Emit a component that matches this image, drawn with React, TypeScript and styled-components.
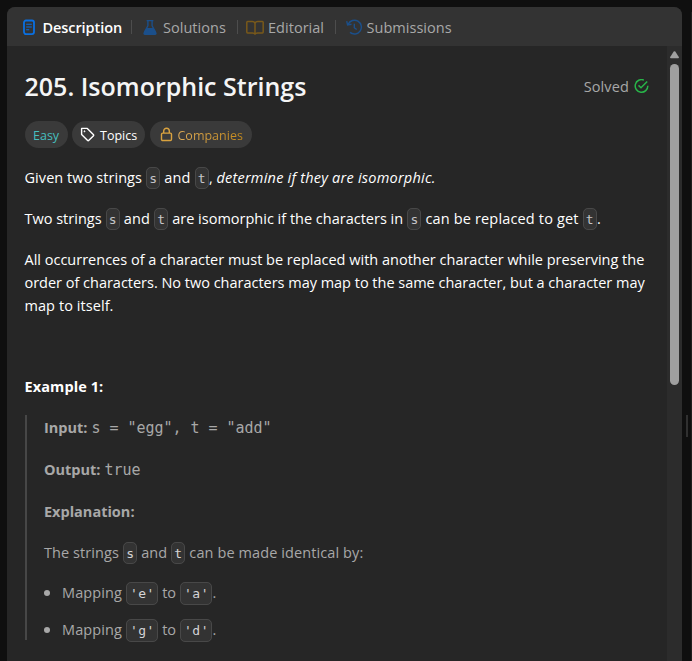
import React from "react";
import styled, { createGlobalStyle } from "styled-components";

const GlobalStyle = createGlobalStyle`
  * { box-sizing: border-box; }
  html, body { margin: 0; padding: 0; background: #0f0f0f; overflow: hidden; }
  body { font-family: "Open Sans", "Noto Sans", sans-serif; font-size: 14.5px; line-height: 23px; color: #fff; }
  p, h1, ul { margin: 0; padding: 0; font-weight: inherit; }
`;

const Page = styled.div`
  display: flex;
  width: 692px;
  height: 661px;
  padding: 7px 0 0 7px;
  overflow: hidden;
`;

const Panel = styled.section`
  display: flex;
  flex-direction: column;
  width: 675px;
  background: #262626;
  border-radius: 8px 8px 0 0;
  overflow: hidden;
`;

const TabBar = styled.nav`
  display: flex;
  align-items: center;
  flex: none;
  height: 39px;
  padding: 2px 0 0 15px;
  background: #333;
`;

const Tab = styled.div<{ $width: number; $active?: boolean }>`
  display: flex;
  align-items: center;
  flex: none;
  width: ${(p) => p.$width}px;
  color: ${(p) => (p.$active ? "#fff" : "#a8a8a8")};
  font-weight: ${(p) => (p.$active ? 600 : 400)};
  letter-spacing: ${(p) => (p.$active ? "-0.08px" : "0.03px")};
  white-space: nowrap;
`;

const TabIcon = styled.span<{ $width: number }>`
  display: flex;
  flex: none;
  width: ${(p) => p.$width}px;
`;

const Divider = styled.span<{ $after: number }>`
  flex: none;
  width: 1px;
  height: 14px;
  margin: 0 ${(p) => p.$after}px 1px 0;
  background: #4d4d4d;
`;

const Body = styled.div`
  display: flex;
  flex: 1;
  min-height: 0;
`;

const Content = styled.main`
  flex: 1;
  min-width: 0;
  padding: 23px 18px 0 17.5px;
`;

const TitleRow = styled.header`
  display: flex;
  justify-content: space-between;
  align-items: center;
  height: 34px;
`;

const Title = styled.h1`
  font-size: 25px;
  font-weight: 600;
  line-height: 34px;
  color: #f5f5f5;
`;

const Solved = styled.span`
  display: flex;
  align-items: center;
  gap: 5px;
  color: #a8a8a8;
  letter-spacing: 0.13px;
`;

const Tags = styled.div`
  display: flex;
  height: 27px;
  margin: 18px 0 18px 0.5px;
`;

const Tag = styled.span<{ $width: number; $color: string; $gap?: number; $after?: number; $inset?: number }>`
  display: flex;
  align-items: center;
  gap: ${(p) => p.$gap ?? 0}px;
  width: ${(p) => p.$width}px;
  margin-right: ${(p) => p.$after ?? 0}px;
  padding: 1px 0 0 ${(p) => p.$inset ?? 8}px;
  border-radius: 14px;
  background: #3a3a3a;
  color: ${(p) => p.$color};
  font-size: 12.5px;
  svg { margin-top: -2px; }
`;

const Companies = styled.span`
  background: linear-gradient(90deg, #dcaa57, #c58a1c);
  background-clip: text;
  color: transparent;
`;

const Paragraph = styled.p<{ $after?: number }>`
  margin-bottom: ${(p) => p.$after ?? 18}px;
  white-space: nowrap;
`;

const Run = styled.span<{ $track: number }>`
  letter-spacing: ${(p) => p.$track}px;
`;

const Emphasis = styled.em`
  letter-spacing: 0.22px;
`;

const Code = styled.code`
  margin: 0 0.35px;
  padding: 3px 2.1px 2px;
  border: 1px solid #484848;
  border-radius: 5px;
  background: #333;
  color: #c4c4c8;
  font-family: "DejaVu Sans Mono", monospace;
  font-size: 13px;
  line-height: 1;
`;

const CodeString = styled(Code)`
  padding: 3px 2.2px 3px 2.8px;
  letter-spacing: 0.5px;
`;

const Heading = styled.p`
  margin: 57.5px 0 17px;
  font-weight: 700;
  letter-spacing: 0.1px;
`;

const Example = styled.div`
  height: 225px;
  padding: 1.5px 0 0 17px;
  margin-left: 0.5px;
  border-left: 2px solid #474747;
  color: #a8a8a8;
  white-space: nowrap;
  ${Code} {
    color: #d4d4d6;
  }
`;

const Strong = styled.strong`
  font-weight: 700;
`;

const Sample = styled.span`
  margin-left: 4px;
  font-family: "DejaVu Sans Mono", monospace;
  font-size: 15px;
  letter-spacing: -0.03px;
  line-height: 1;
`;

const List = styled.ul`
  list-style: none;
`;

const Item = styled.li`
  display: flex;
  align-items: center;
  height: 23px;
  margin-bottom: 14px;
`;

const Bullet = styled.span`
  width: 6px;
  height: 6px;
  margin-right: 12px;
  border-radius: 50%;
  background: #a8a8a8;
`;

const ScrollTrack = styled.div`
  display: flex;
  flex-direction: column;
  align-items: center;
  width: 15px;
  padding-top: 5px;
  background: #2c2c2c;
`;

const Thumb = styled.div`
  width: 9px;
  height: 321px;
  margin-top: 5px;
  border-radius: 5px;
  background: #9f9f9f;
`;

const Gutter = styled.div`
  display: flex;
  flex: none;
  width: 9px;
  padding: 408px 0 0 4px;
`;

const Handle = styled.span`
  width: 2px;
  height: 22px;
  background: #303030;
`;

const Neighbour = styled.aside`
  width: 1px;
  margin-top: 5px;
  flex: none;
  background: #1f1f1f;
`;

const DocIcon = () => (
  <svg width="14" height="17" viewBox="0 0 14 17" fill="none" stroke="#0a6fe0">
    <rect x="2" y="1.5" width="10" height="13.6" rx="2" strokeWidth="1.8" />
    <path d="M4.2 5.2h5.6M4.2 8h5.6M4.2 10.8h3" strokeWidth="1.1" />
  </svg>
);

const FlaskIcon = () => (
  <svg width="14" height="17" viewBox="0 0 14 17">
    <path d="M3.6 1.6h6.8M4.9 1.8v4.9L1.6 13.1M9.1 1.8v4.9l3.3 6.4" fill="none" stroke="#1b4f8a" strokeWidth="1.4" />
    <path d="M3.3 8.9h7.4l2.8 4.9c.5 1.1-.2 2.3-1.4 2.3H1.9c-1.2 0-1.9-1.2-1.4-2.3z" fill="#1b4f8a" />
  </svg>
);

const BookIcon = () => (
  <svg width="18" height="16" viewBox="0 0 18 16" fill="none" stroke="#79591a" strokeWidth="1.5" strokeLinejoin="round">
    <path d="M9 3.2C8.5 2.1 7.6 1.6 6.4 1.6H1.6c-.5 0-.8.3-.8.8v9.7c0 .5.3.8.8.8h4.9c1.2 0 2 .4 2.5 1.3.5-.9 1.3-1.3 2.5-1.3h4.9c.5 0 .8-.3.8-.8V2.4c0-.5-.3-.8-.8-.8h-4.8c-1.2 0-2.1.5-2.6 1.6zM9 3.2v11" />
  </svg>
);

const HistoryIcon = () => (
  <svg width="17" height="17" viewBox="0 0 17 17" fill="none" stroke="#1b4f8a" strokeWidth="1.5">
    <path d="M2.2 5.2A6.9 6.9 0 1 1 4 13.4" />
    <path d="M.7 2.2l.9 3.7 3.9-.6M8.3 4.8v3.9l2.4 1.8" strokeWidth="1.4" />
  </svg>
);

const CheckIcon = () => (
  <svg width="15" height="15" viewBox="0 0 15 15" fill="none" stroke="#28b449" strokeWidth="1.5">
    <path d="M9.9 1.1A6.3 6.3 0 1 0 13.8 6.8" />
    <path d="M4.5 6.4l2.5 2.4L13.2 2.5" />
  </svg>
);

const TagIcon = () => (
  <svg width="15" height="15" viewBox="0 0 15 15" fill="none" stroke="#fff" strokeWidth="1.4" strokeLinejoin="round">
    <path d="M1.6 1.4h5.7l6 6c.5.5.5 1 0 1.5l-4.4 4.4c-.5.5-1 .5-1.5 0l-5.8-5.9z" />
    <circle cx="4.5" cy="4.3" r=".5" fill="#fff" strokeWidth="1" />
  </svg>
);

const LockIcon = () => (
  <svg width="13" height="15" viewBox="0 0 13 15" fill="none" stroke="#d9a23f" strokeWidth="1.4">
    <rect x="1.5" y="6.1" width="10" height="7.4" rx="1.2" />
    <path d="M3.7 6V4a2.8 2.8 0 0 1 5.6 0v2" />
  </svg>
);

const ArrowUp = () => (
  <svg width="9" height="8" viewBox="0 0 9 8" fill="#9f9f9f">
    <path d="M3.7.6Q4.5-.3 5.3.6L8.8 6Q9.2 7.2 8.2 7.2H.8Q-.2 7.2.2 6z" />
  </svg>
);

export default function App() {
  return (
    <>
      <GlobalStyle />
      <Page>
        <Panel>
          <TabBar>
            <Tab $width={109} $active>
              <TabIcon $width={20.5}><DocIcon /></TabIcon>Description
            </Tab>
            <Divider $after={11} />
            <Tab $width={94}>
              <TabIcon $width={20}><FlaskIcon /></TabIcon>Solutions
            </Tab>
            <Divider $after={8} />
            <Tab $width={89}>
              <TabIcon $width={22}><BookIcon /></TabIcon>Editorial
            </Tab>
            <Divider $after={10} />
            <Tab $width={110}>
              <TabIcon $width={20.5}><HistoryIcon /></TabIcon>Submissions
            </Tab>
          </TabBar>
          <Body>
            <Content>
              <TitleRow>
                <Title>205. Isomorphic Strings</Title>
                <Solved>Solved<CheckIcon /></Solved>
              </TitleRow>
              <Tags>
                <Tag $width={43} $color="#46bfbf" $after={4}>Easy</Tag>
                <Tag $width={73} $color="#fff" $gap={5} $after={5}><TagIcon />Topics</Tag>
                <Tag $width={102} $color="#d9a23f" $gap={5} $inset={9.5}>
                  <LockIcon /><Companies>Companies</Companies>
                </Tag>
              </Tags>
              <Paragraph>
                <Run $track={0.06}>Given two strings</Run> <Code>s</Code> <Run $track={0.1}>and</Run> <Code>t</Code>,{" "}
                <Emphasis>determine if they are isomorphic.</Emphasis>
              </Paragraph>
              <Paragraph>
                Two strings <Code>s</Code> <Run $track={0.1}>and</Run> <Code>t</Code>{" "}
                are isomorphic if the characters in <Code>s</Code>{" "}
                <Run $track={0.16}>can be replaced to get</Run> <Code>t</Code>.
              </Paragraph>
              <Paragraph>
                All occurrences of a character must be replaced with another character while preserving the
                <br />
                <Run $track={-0.015}>
                  order of characters. No two characters may map to the same character, but a character may
                </Run>
                <br />
                <Run $track={0.07}>map to itself.</Run>
              </Paragraph>
              <Heading>Example 1:</Heading>
              <Example>
                <Paragraph $after={19}><Strong>Input:</Strong><Sample>s = "egg", t = "add"</Sample></Paragraph>
                <Paragraph $after={18.5}><Strong>Output:</Strong><Sample>true</Sample></Paragraph>
                <Paragraph><Strong>Explanation:</Strong></Paragraph>
                <Paragraph $after={17.5}>
                  <Run $track={0.08}>The strings</Run> <Code>s</Code> and <Code>t</Code>{" "}
                  <Run $track={0.1}>can be made identical by:</Run>
                </Paragraph>
                <List>
                  <Item>
                    <Bullet />
                    <span><Run $track={0.1}>Mapping</Run> <CodeString>'e'</CodeString> to <CodeString>'a'</CodeString>.</span>
                  </Item>
                  <Item>
                    <Bullet />
                    <span><Run $track={0.1}>Mapping</Run> <CodeString>'g'</CodeString> to <CodeString>'d'</CodeString>.</span>
                  </Item>
                </List>
              </Example>
            </Content>
            <ScrollTrack>
              <ArrowUp />
              <Thumb />
            </ScrollTrack>
          </Body>
        </Panel>
        <Gutter><Handle /></Gutter>
        <Neighbour />
      </Page>
    </>
  );
}
